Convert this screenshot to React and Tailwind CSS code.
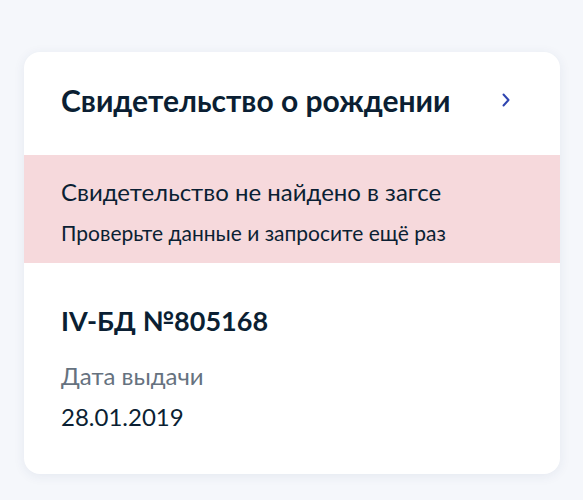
import React from 'react';

const ChevronRight = () => (
  <svg width="8" height="14" viewBox="0 0 8 14" fill="none">
    <path d="M1.5 1.5L6.5 7L1.5 12.5" stroke="#2f45b0" strokeWidth="2" strokeLinecap="round" strokeLinejoin="round" />
  </svg>
);

const App = () => {
  return (
    <div className="min-h-screen bg-[#f5f7fb] pt-[52px] pl-[24px] pr-[23px] font-['Lato',sans-serif] text-[#0b1f33]">
      <div className="bg-white rounded-[16px] shadow-[0_2px_12px_rgba(40,60,120,0.08)] overflow-hidden">
        {/* Header */}
        <div className="h-[103px] flex items-start justify-between pl-[37px] pr-[50px] pt-[30px]">
          <h2 className="text-[30px] font-bold leading-[36px]">Свидетельство о рождении</h2>
          <div className="mt-[11px]">
            <ChevronRight />
          </div>
        </div>

        {/* Error */}
        <div className="bg-[#f6d9dc] h-[108px] pl-[37px] pt-[21px]">
          <p className="text-[24px] leading-[32px]">Свидетельство не найдено в загсе</p>
          <p className="text-[21px] leading-[28px] mt-[11px]">Проверьте данные и запросите ещё раз</p>
        </div>

        {/* Details */}
        <div className="pl-[37px] pt-[42px] pb-[41px]">
          <h3 className="text-[27px] font-bold leading-[32px]">IV-БД №805168</h3>
          <p className="text-[24px] leading-[32px] text-[#66727f] mt-[23px]">Дата выдачи</p>
          <p className="text-[24px] leading-[32px] mt-[9px]">28.01.2019</p>
        </div>
      </div>
    </div>
  );
};

export default App;
